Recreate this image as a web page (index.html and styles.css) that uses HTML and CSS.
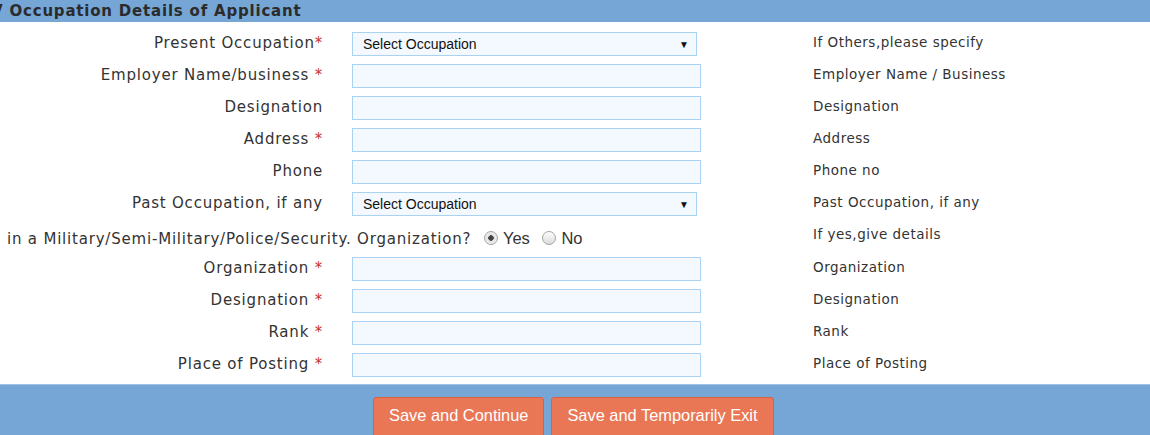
FILE: index.html
```html
<!DOCTYPE html>
<html lang="en">
<head>
    <meta charset="UTF-8">
    <meta name="viewport" content="width=device-width, initial-scale=1.0">
    <title>Occupation Details</title>
    <link rel="stylesheet" href="styles.css">
</head>
<body>
    <div class="panel-head"><span class="chev">V</span> Occupation Details of Applicant</div>

    <div class="form-grid">
        <label class="lbl">Present Occupation<span class="req">*</span></label>
        <div class="fld"><div class="sel">Select Occupation<span class="arrow">&#9660;</span></div></div>
        <div class="hint">If Others,please specify</div>

        <label class="lbl">Employer Name/business <span class="req">*</span></label>
        <div class="fld"><input type="text"></div>
        <div class="hint">Employer Name / Business</div>

        <label class="lbl">Designation</label>
        <div class="fld"><input type="text"></div>
        <div class="hint">Designation</div>

        <label class="lbl">Address <span class="req">*</span></label>
        <div class="fld"><input type="text"></div>
        <div class="hint">Address</div>

        <label class="lbl">Phone</label>
        <div class="fld"><input type="text"></div>
        <div class="hint">Phone no</div>

        <label class="lbl">Past Occupation, if any</label>
        <div class="fld"><div class="sel">Select Occupation<span class="arrow">&#9660;</span></div></div>
        <div class="hint">Past Occupation, if any</div>

        <div class="radio-row">
            in a Military/Semi-Military/Police/Security. Organization?
            <label class="opt"><input type="radio" name="mil" checked><span>Yes</span></label>
            <label class="opt"><input type="radio" name="mil"><span>No</span></label>
        </div>
        <div class="hint">If yes,give details</div>

        <label class="lbl">Organization <span class="req">*</span></label>
        <div class="fld"><input type="text"></div>
        <div class="hint">Organization</div>

        <label class="lbl">Designation <span class="req">*</span></label>
        <div class="fld"><input type="text"></div>
        <div class="hint">Designation</div>

        <label class="lbl">Rank <span class="req">*</span></label>
        <div class="fld"><input type="text"></div>
        <div class="hint">Rank</div>

        <label class="lbl">Place of Posting <span class="req">*</span></label>
        <div class="fld"><input type="text"></div>
        <div class="hint">Place of Posting</div>
    </div>

    <div class="panel-foot">
        <button class="btn">Save and Continue</button>
        <button class="btn">Save and Temporarily Exit</button>
    </div>
</body>
</html>
```

FILE: styles.css
```css
body {
    margin: 0;
    font-family: "DejaVu Sans", Verdana, sans-serif;
    color: #333;
    background: #fff;
    overflow: hidden;
}
.panel-head {
    height: 22px;
    line-height: 23px;
    background: #75a6d6;
    color: #2b2b2b;
    font-weight: bold;
    font-size: 15px;
    letter-spacing: 0.8px;
    white-space: nowrap;
}
.chev {
    display: inline-block;
    margin-left: -9px;
}
.form-grid {
    display: grid;
    grid-template-columns: 323px 349px auto;
    column-gap: 29px;
    row-gap: 8px;
    padding-top: 10px;
}
.form-grid > .hint {
    margin-left: 83px;
}
.lbl {
    text-align: right;
    font-size: 15px;
    letter-spacing: 0.8px;
    line-height: 23px;
    white-space: nowrap;
}
.req {
    color: #c9302c;
}
.fld {
    height: 24px;
}
.fld input {
    box-sizing: border-box;
    width: 349px;
    height: 24px;
    margin: 0;
    border: 1px solid #a9d2f3;
    background: #f4f9ff;
    border-radius: 0;
    outline: none;
}
.sel {
    box-sizing: border-box;
    width: 345px;
    height: 24px;
    border: 1px solid #a9d2f3;
    background: #f4f9ff;
    font-family: "Liberation Sans", Arial, sans-serif;
    font-size: 14px;
    line-height: 23px;
    padding-left: 10px;
    color: #111;
    position: relative;
}
.arrow {
    position: absolute;
    right: 7px;
    top: 0;
    font-size: 10px;
}
.hint {
    font-size: 13.5px;
    letter-spacing: 0.5px;
    line-height: 20px;
    color: #333;
    white-space: nowrap;
}
.radio-row {
    grid-column: 1 / 3;
    padding-left: 7px;
    font-size: 15px;
    letter-spacing: 0.8px;
    line-height: 28px;
    height: 25px;
    white-space: nowrap;
}
.opt {
    margin-left: 7px;
    font-family: "Liberation Sans", Arial, sans-serif;
    font-size: 16.5px;
    letter-spacing: 0;
}
.opt span {
    margin-left: 5px;
}
.opt input {
    appearance: none;
    -webkit-appearance: none;
    box-sizing: border-box;
    margin: 0;
    width: 14px;
    height: 14px;
    border: 1px solid #a3a3a3;
    border-radius: 50%;
    background: linear-gradient(#fdfdfd, #dcdcdc);
    vertical-align: -1px;
}
.opt input:checked {
    background: radial-gradient(circle, #444 0, #444 2.5px, #e4e4e4 3px, #f2f2f2 100%);
}
.panel-foot {
    margin-top: 7px;
    height: 60px;
    background: #75a6d6;
    border-top: 1px solid #9fc2e5;
    padding-top: 12px;
    padding-left: 373px;
    display: flex;
    align-items: flex-start;
    gap: 7px;
    box-sizing: border-box;
}
.btn {
    padding: 7px 15px 18px;
    line-height: 20px;
    border: 1px solid #d8623f;
    border-radius: 3px;
    background: #e97756;
    color: #fff;
    font-family: "Liberation Sans", Arial, sans-serif;
    font-size: 16.4px;
    cursor: pointer;
}
```
